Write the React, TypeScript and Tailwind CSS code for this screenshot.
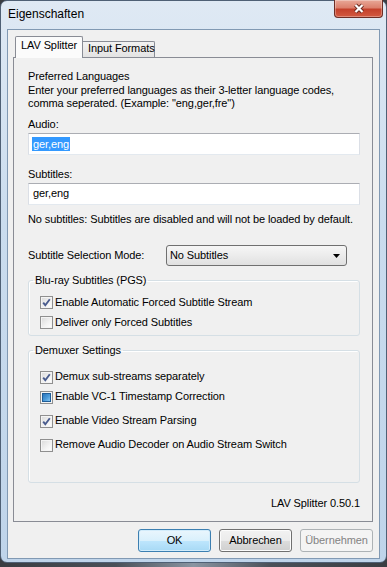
import type { ReactNode } from 'react'

type CheckState = 'on' | 'off' | 'mixed'

function Check({ state }: { state: CheckState }) {
  return (
    <span className="flex h-[13px] w-[13px] shrink-0 items-center justify-center border border-[#8f8f8f] bg-[linear-gradient(135deg,#d9d9d9_0%,#f3f3f3_60%,#ffffff_100%)] shadow-[inset_0_0_0_1px_#f4f4f4]">
      {state === 'on' && (
        <svg width="11" height="11" viewBox="0 0 11 11">
          <path d="M2.2 5.6 L4.3 8.2 L8.8 2.2" fill="none" stroke="#4a5c8e" strokeWidth="1.9" />
        </svg>
      )}
      {state === 'mixed' && (
        <span className="h-[9px] w-[9px] border border-[#1f5d97] bg-[linear-gradient(135deg,#2a76bd_0%,#4c9ad8_55%,#86c6f2_100%)]" />
      )}
    </span>
  )
}

function CheckRow({ state, label, className = '' }: { state: CheckState; label: string; className?: string }) {
  return (
    <div className={`flex h-[16px] items-center gap-[2px] pl-[11px] ${className}`}>
      <Check state={state} />
      <span className="leading-[13.5px]">{label}</span>
    </div>
  )
}

function Group({ title, className = '', children }: { title: string; className?: string; children: ReactNode }) {
  return (
    <fieldset className={`rounded-[3px] border border-[#d5dfe5] shadow-[inset_1px_1px_0_#ffffff] ${className}`}>
      <legend className="ml-[4px] px-[2px] leading-[13.5px]">{title}</legend>
      {children}
    </fieldset>
  )
}

function Button({ label, kind = 'normal' }: { label: string; kind?: 'default' | 'normal' | 'disabled' }) {
  const look =
    kind === 'default'
      ? 'border-[#3c7fb1] bg-[linear-gradient(180deg,#eaf6fd_0%,#d9f0fc_50%,#bee6fd_51%,#a7d9f5_100%)] shadow-[inset_0_0_0_1px_#d2ecfb] text-black'
      : kind === 'disabled'
        ? 'border-[#adb2b5] bg-[#f4f4f4] text-[#838383]'
        : 'border-[#707070] bg-[linear-gradient(180deg,#f2f2f2_0%,#ebebeb_50%,#dddddd_51%,#cfcfcf_100%)] shadow-[inset_0_0_0_1px_#fcfcfc] text-black'
  return (
    <div className={`flex h-[23px] w-[73px] items-center justify-center rounded-[3px] border ${look}`}>
      {label}
    </div>
  )
}

export default function App() {
  return (
    <div className="h-[567px] w-[387px] overflow-hidden bg-[linear-gradient(90deg,#3a3d42_0%,#4a5058_30%,#8a95a2_50%,#4a5058_70%,#3a3d42_100%)] font-['Liberation_Sans',Arial,sans-serif] text-[11px] tracking-[-0.1px] text-black">
      {/* fenêtre */}
      <div className="flex flex-col rounded-[7px] border border-[#4f6075] bg-[linear-gradient(180deg,#dfe9f4_0%,#cadcee_40%,#bfd4ea_100%)] px-[6px] pb-[3px]">
        {/* barre de titre */}
        <div className="flex h-[28px] items-start justify-between">
          <span className="pl-[1px] pt-[6px] text-[12px] leading-[15px] tracking-normal">Eigenschaften</span>
          <div className="mr-[-3px] mt-[-1px] flex h-[18px] w-[49px] items-center justify-center rounded-b-[4px] border border-t-0 border-[#6d2d25] bg-[linear-gradient(180deg,#e8a898_0%,#dc806d_45%,#c4412c_55%,#d35a41_100%)] shadow-[inset_0_0_0_1px_rgba(255,255,255,0.3)]">
            <svg width="14" height="11" viewBox="0 0 14 11">
              <path d="M3.5 2 L10.5 9 M10.5 2 L3.5 9" stroke="#6a2a20" strokeWidth="4" />
              <path d="M3.5 2 L10.5 9 M10.5 2 L3.5 9" stroke="#ffffff" strokeWidth="2.2" />
            </svg>
          </div>
        </div>

        {/* zone client */}
        <div className="flex flex-col border border-[#8199b3] bg-[#f0f0f0] pb-[6px] pt-[6px]">
          {/* onglets */}
          <div className="ml-[5px] flex items-end pl-[2px]">
            <div className="relative z-10 mb-[-1px] h-[22px] w-[68px] whitespace-nowrap rounded-t-[2px] border border-b-0 border-[#898c95] bg-[#fbfbfb] pl-[5px] pt-[2px] leading-[13.5px]">
              LAV Splitter
            </div>
            <div className="h-[16px] w-[72px] whitespace-nowrap rounded-tr-[2px] border border-b-0 border-l-0 border-[#898c95] bg-[linear-gradient(180deg,#f2f2f2_0%,#e3e3e3_100%)] pl-[5px] leading-[13.5px]">
              Input Formats
            </div>
          </div>

          {/* panneau */}
          <div className="ml-[5px] flex h-[465px] w-[360px] flex-col border border-[#898c95] bg-[#f0f0f0] pl-[14px] pr-[12px] pt-[12px]">
            <div className="leading-[13.5px]">
              <div>Preferred Languages</div>
              <div>Enter your preferred languages as their 3-letter language codes,</div>
              <div>comma seperated. (Example: &quot;eng,ger,fre&quot;)</div>
            </div>

            <div className="mt-[7px] leading-[13.5px]">Audio:</div>
            <div className="mt-[2px] flex h-[22px] items-center border border-[#abadb3] border-x-[#dbdfe6] border-b-[#e3e9ef] bg-white pl-[3px]">
              <span className="bg-[#3399ff] px-[1px] leading-[14px] text-white">ger,eng</span>
            </div>

            <div className="mt-[13px] leading-[13.5px]">Subtitles:</div>
            <div className="mt-[1px] flex h-[22px] items-center border border-[#abadb3] border-x-[#dbdfe6] border-b-[#e3e9ef] bg-white pl-[4px]">
              ger,eng
            </div>

            <div className="mt-[8px] leading-[13.5px]">No subtitles: Subtitles are disabled and will not be loaded by default.</div>

            <div className="mt-[19px] flex items-center">
              <span className="w-[138px]">Subtitle Selection Mode:</span>
              <div className="flex h-[21px] w-[181px] items-center justify-between rounded-[3px] border border-[#707070] bg-[linear-gradient(180deg,#f6f6f6_0%,#ececec_50%,#e0e0e0_100%)] pl-[3px] pr-[6px]">
                <span>No Subtitles</span>
                <svg width="7" height="4" viewBox="0 0 7 4">
                  <path d="M0 0 H7 L3.5 4 Z" fill="#000" />
                </svg>
              </div>
            </div>

            <Group title="Blu-ray Subtitles (PGS)" className="mt-[8px] pb-[4px]">
              <CheckRow state="on" label="Enable Automatic Forced Subtitle Stream" className="mt-[7px]" />
              <CheckRow state="off" label="Deliver only Forced Subtitles" className="mt-[4px]" />
            </Group>

            <Group title="Demuxer Settings" className="mt-[8px] pb-[29px]">
              <CheckRow state="on" label="Demux sub-streams separately" className="mt-[12px]" />
              <CheckRow state="mixed" label="Enable VC-1 Timestamp Correction" className="mt-[4px]" />
              <CheckRow state="on" label="Enable Video Stream Parsing" className="mt-[8px]" />
              <CheckRow state="off" label="Remove Audio Decoder on Audio Stream Switch" className="mt-[8px]" />
            </Group>

            <div className="mt-[14px] text-right leading-[13.5px]">LAV Splitter 0.50.1</div>
          </div>

          {/* boutons */}
          <div className="mt-[7px] flex justify-end gap-[8px] pr-[6px]">
            <Button label="OK" kind="default" />
            <Button label="Abbrechen" />
            <Button label="Übernehmen" kind="disabled" />
          </div>
        </div>
      </div>
    </div>
  )
}
